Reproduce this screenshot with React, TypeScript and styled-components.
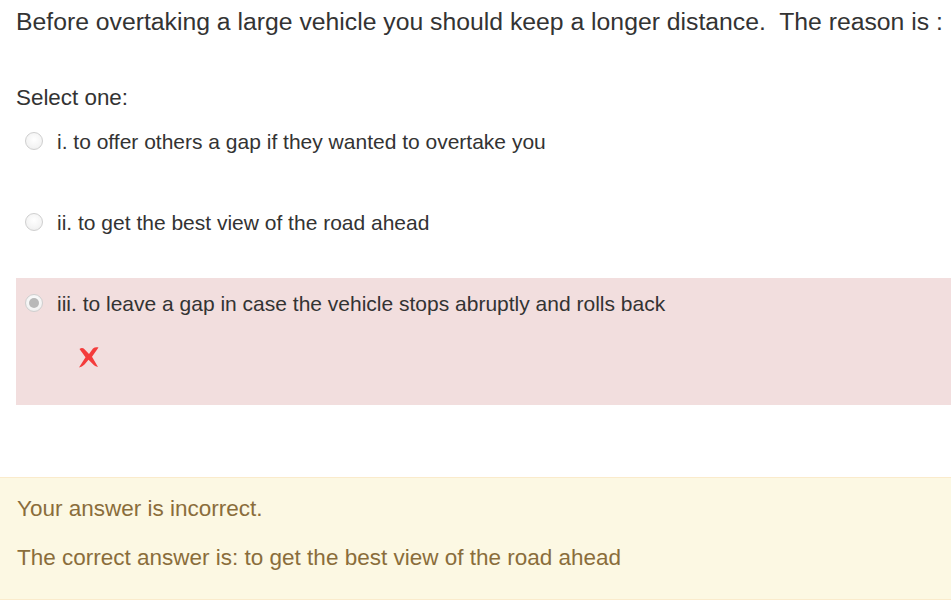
import React from "react";
import styled, { createGlobalStyle } from "styled-components";

const Global = createGlobalStyle`
  html, body { margin: 0; padding: 0; background: #fff; }
  body { font-family: "Liberation Sans", Arial, sans-serif; color: #333; overflow: hidden; }
`;

const Page = styled.div`
  width: 951px;
  display: flex;
  flex-direction: column;
`;

const Question = styled.div`
  padding-left: 16px;
  display: flex;
  flex-direction: column;
`;

const Title = styled.div`
  font-size: 24.75px;
  line-height: 30px;
  margin-top: 7px;
  white-space: nowrap;
  color: #333;
`;

const Prompt = styled.div`
  font-size: 22.4px;
  line-height: 26px;
  margin-top: 48px;
  margin-bottom: 5px;
  color: #333;
`;

const Answers = styled.div`
  display: flex;
  flex-direction: column;
`;

const Option = styled.div<{ $incorrect?: boolean }>`
  padding: 11px 0 ${(p) => (p.$incorrect ? "37px" : "40px")} 9px;
  background: ${(p) => (p.$incorrect ? "#f2dede" : "transparent")};
  margin-right: -20px;
  display: flex;
  flex-direction: column;
`;

const Line = styled.div`
  display: flex;
  align-items: center;
  gap: 14px;
  height: 30px;
`;

const Radio = styled.span<{ $checked?: boolean }>`
  width: 16px;
  height: 16px;
  margin-top: -2px;
  border-radius: 50%;
  border: 1px solid #cfcfcf;
  background: radial-gradient(circle at 50% 40%, #ffffff 0%, #f4f4f4 60%, #e9e9e9 100%);
  display: flex;
  align-items: center;
  justify-content: center;
  flex-shrink: 0;
  &::after {
    content: "";
    display: ${(p) => (p.$checked ? "block" : "none")};
    width: 10px;
    height: 10px;
    border-radius: 50%;
    background: #b8b8b8;
  }
`;

const Label = styled.span`
  font-size: 21px;
  color: #333;
  white-space: nowrap;
`;

const Mark = styled.div`
  margin: 27px 0 0 53px;
  width: 22px;
  height: 22px;
`;

const Feedback = styled.div`
  margin-top: 72px;
  background: #fcf8e3;
  border-top: 1px solid #faebcc;
  border-bottom: 1px solid #faebcc;
  padding: 16px 0 26px 17px;
  display: flex;
  flex-direction: column;
  gap: 19px;
  color: #8a6d3b;
  font-size: 22.5px;
  line-height: 30px;
`;

const FeedLine = styled.div`
  white-space: nowrap;
`;

const CrossIcon = () => (
  <svg width="22" height="22" viewBox="0 0 22 22">
    <path
      d="M1.5 3 C3.5 1.5 5 1.8 6.5 3.2 L11 8 L15 2.5 C16.5 1.2 18.5 0.8 20.5 1.5 L14 10.8 L20 21 C18 20.8 16.2 19.5 14.5 17.8 L10.5 13.8 L6.5 18.5 C4.8 20.2 3 21 1 21.5 L7.5 11.2 Z"
      fill="#f43c3c"
    />
  </svg>
);

export default function App() {
  return (
    <Page>
      <Global />
      <Question>
        <Title>Before overtaking a large vehicle you should keep a longer distance.&nbsp; The reason is :</Title>
        <Prompt>Select one:</Prompt>
        <Answers>
          <Option>
            <Line>
              <Radio />
              <Label>i. to offer others a gap if they wanted to overtake you</Label>
            </Line>
          </Option>
          <Option>
            <Line>
              <Radio />
              <Label>ii. to get the best view of the road ahead</Label>
            </Line>
          </Option>
          <Option $incorrect>
            <Line>
              <Radio $checked />
              <Label>iii. to leave a gap in case the vehicle stops abruptly and rolls back</Label>
            </Line>
            <Mark>
              <CrossIcon />
            </Mark>
          </Option>
        </Answers>
      </Question>
      <Feedback>
        <FeedLine>Your answer is incorrect.</FeedLine>
        <FeedLine>The correct answer is: to get the best view of the road ahead</FeedLine>
      </Feedback>
    </Page>
  );
}
